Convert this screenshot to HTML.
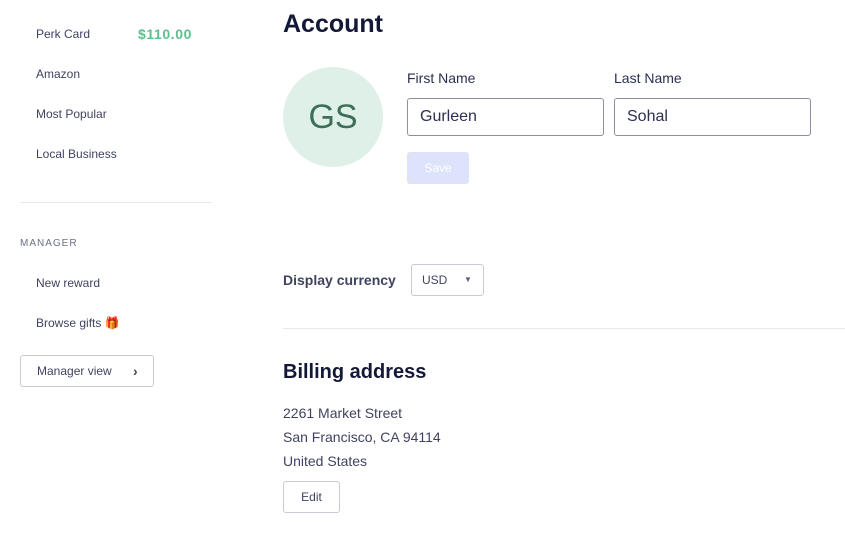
<!DOCTYPE html>
<html><head><style>
body{margin:0;width:845px;height:545px;background:#fff;font-family:"Liberation Sans",sans-serif;color:#3f4360;position:relative;overflow:hidden}
.a{position:absolute;white-space:nowrap}
.nav{font-size:12px;color:#3f4360}
</style></head><body>
<div class="a nav" style="left:36px;top:27px">Perk Card</div>
<div class="a" style="left:138px;top:26px;font-size:14px;color:#5cbf8e;letter-spacing:.6px;font-weight:bold">$110.00</div>
<div class="a nav" style="left:36px;top:67px">Amazon</div>
<div class="a nav" style="left:36px;top:107px">Most Popular</div>
<div class="a nav" style="left:36px;top:147px">Local Business</div>
<div class="a" style="left:20px;top:202px;width:192px;height:1px;background:#e8e8ee"></div>
<div class="a" style="left:20px;top:238px;font-size:10px;letter-spacing:1px;color:#6b6f88">MANAGER</div>
<div class="a nav" style="left:36px;top:276px">New reward</div>
<div class="a nav" style="left:36px;top:316px">Browse gifts 🎁</div>
<div class="a" style="left:20px;top:355px;width:132px;height:30px;border:1px solid #c9cad6;border-radius:3px;font-size:12px;line-height:30px;text-indent:16px;color:#3f4360">Manager view<span style="position:absolute;left:96px;font-weight:bold;font-size:14px">›</span></div>

<div class="a" style="left:283px;top:10px;font-size:25px;font-weight:bold;color:#141838">Account</div>
<div class="a" style="left:283px;top:67px;width:100px;height:100px;border-radius:50%;background:#dff0e8;color:#3d6e57;font-size:34px;text-align:center;line-height:100px">GS</div>
<div class="a" style="left:407px;top:70px;font-size:14px;color:#2c3050">First Name</div>
<div class="a" style="left:614px;top:70px;font-size:14px;color:#2c3050">Last Name</div>
<div class="a" style="left:407px;top:98px;width:195px;height:36px;border:1px solid #8d8fa3;border-radius:3px;font-size:16px;line-height:36px;text-indent:12px;color:#2c3050">Gurleen</div>
<div class="a" style="left:614px;top:98px;width:195px;height:36px;border:1px solid #8d8fa3;border-radius:3px;font-size:16px;line-height:36px;text-indent:12px;color:#2c3050">Sohal</div>
<div class="a" style="left:407px;top:152px;width:62px;height:32px;background:#dde3fb;border-radius:3px;color:#fff;font-size:12px;text-align:center;line-height:32px">Save</div>

<div class="a" style="left:283px;top:272px;font-size:14px;font-weight:bold;color:#3f4360">Display currency</div>
<div class="a" style="left:411px;top:264px;width:71px;height:30px;border:1px solid #c9cad6;border-radius:3px;font-size:12px;line-height:30px;text-indent:10px">USD<span style="position:absolute;left:42px;top:0;font-size:8px;color:#5a5e78">▼</span></div>
<div class="a" style="left:283px;top:328px;width:562px;height:1px;background:#e8e8ee"></div>
<div class="a" style="left:283px;top:361px;font-size:20px;font-weight:bold;color:#141838">Billing address</div>
<div class="a" style="left:283px;top:401px;font-size:14px;line-height:24px;white-space:normal">2261 Market Street<br>San Francisco, CA 94114<br>United States</div>
<div class="a" style="left:283px;top:481px;width:55px;height:30px;border:1px solid #c9cad6;border-radius:3px;font-size:12px;line-height:30px;text-align:center">Edit</div>
</body></html>
